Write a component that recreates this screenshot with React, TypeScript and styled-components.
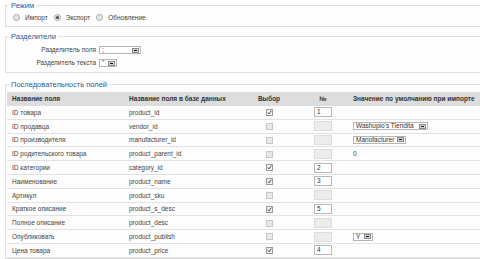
import React from "react";
import styled, { createGlobalStyle } from "styled-components";

const Global = createGlobalStyle`
  html, body { margin: 0; padding: 0; background: #fff; }
  body {
    font-family: "Liberation Sans", Arial, sans-serif;
    font-size: 6.5px;
    color: #444;
    overflow: hidden;
    width: 480px;
    height: 259px;
  }
`;

const Page = styled.div`
  padding-top: 1px;
  width: 480px;
  overflow: hidden;
`;

const Fieldset = styled.fieldset<{ $pt: number; $pb: number; $mb: number }>`
  margin: 0 -6px ${(p) => p.$mb}px 5px;
  padding: ${(p) => p.$pt}px 0 ${(p) => p.$pb}px 2px;
  border: 1px solid #e0e0e0;
  background: #fdfdfd;
  min-width: 0;
`;

const Legend = styled.legend`
  margin-left: 1px;
  padding: 0 2px;
  font-size: 7.5px;
  line-height: 9px;
  color: #2d5e91;
`;

const RadioRow = styled.div`
  display: flex;
  align-items: center;
  height: 9px;
  padding-left: 5px;
`;

const RadioItem = styled.label`
  display: flex;
  align-items: center;
  gap: 5px;
  margin-right: 6px;
  color: #444;
`;

const RadioCircle = styled.span<{ $on?: boolean }>`
  position: relative;
  width: 5px;
  height: 5px;
  border-radius: 50%;
  border: 1px solid #a8a8a8;
  background: #e6e6e6;
  box-sizing: content-box;
  &::after {
    content: "";
    display: ${(p) => (p.$on ? "block" : "none")};
    position: absolute;
    left: 1px;
    top: 1px;
    width: 3px;
    height: 3px;
    border-radius: 50%;
    background: #3a4a3a;
  }
`;

const SepGrid = styled.div`
  display: grid;
  grid-template-columns: 88px auto;
  column-gap: 3px;
  row-gap: 3px;
  align-items: center;
`;

const SepLabel = styled.span`
  text-align: right;
  line-height: 10px;
  color: #444;
`;

const Select = styled.div<{ $w: number }>`
  display: flex;
  align-items: center;
  justify-content: space-between;
  gap: 2px;
  width: ${(p) => p.$w}px;
  height: 8px;
  box-sizing: border-box;
  border: 1px solid #b5b5b5;
  background: #fff;
  padding-left: 2px;
  font-size: 6.5px;
  line-height: 6px;
  color: #333;
  white-space: nowrap;
`;

const SelectBtn = styled.span`
  display: flex;
  flex: none;
  align-items: center;
  justify-content: center;
  width: 7px;
  height: 5px;
  margin-right: 1px;
  background: #d6d6d6;
  border: 1px solid #8a8a8a;
  box-sizing: border-box;
  &::after {
    content: "";
    width: 3px;
    height: 1px;
    background: #111;
  }
`;

const Table = styled.table`
  margin-left: -1px;
  margin-top: 3px;
  width: 473px;
  border-collapse: collapse;
  table-layout: fixed;
`;

const Th = styled.th<{ $align?: string; $pl?: number }>`
  background: #dddddd;
  height: 13.5px;
  padding: 0 0 0 ${(p) => p.$pl ?? 0}px;
  text-align: ${(p) => p.$align ?? "left"};
  font-weight: bold;
  color: #333;
  font-size: 6.5px;
  white-space: nowrap;
  overflow: hidden;
`;

const Tr = styled.tr`
  height: 13.8px;
  border-bottom: 1px solid #e2e2e2;
`;

const Td = styled.td<{ $align?: string; $pl?: number }>`
  padding: 0 0 0 ${(p) => p.$pl ?? 0}px;
  text-align: ${(p) => p.$align ?? "left"};
  vertical-align: middle;
  color: #444;
  white-space: nowrap;
  overflow: hidden;
`;

const Check = styled.span<{ $on: boolean }>`
  display: inline-flex;
  align-items: center;
  justify-content: center;
  width: 7px;
  height: 7px;
  box-sizing: border-box;
  border: 1px solid ${(p) => (p.$on ? "#9a9a9a" : "#c8c8c8")};
  background: ${(p) => (p.$on ? "#f4f4f4" : "#e8e8e8")};
  vertical-align: middle;
`;

const NumBox = styled.div<{ $off: boolean }>`
  width: 18px;
  height: 10px;
  margin: 0 auto;
  box-sizing: border-box;
  border: 1px solid ${(p) => (p.$off ? "#dcdcdc" : "#b8b8b8")};
  background: ${(p) => (p.$off ? "#ececec" : "#fff")};
  padding-left: 2px;
  font-size: 6.5px;
  line-height: 8px;
  color: #333;
  text-align: left;
`;

type Row = {
  name: string;
  db: string;
  on: boolean;
  num?: string;
  def?: { kind: "select"; text: string; w: number } | { kind: "text"; text: string };
};

const rows: Row[] = [
  { name: "ID товара", db: "product_id", on: true, num: "1" },
  { name: "ID продавца", db: "vendor_id", on: false, def: { kind: "select", text: "Washupio's Tiendita", w: 75 } },
  { name: "ID производителя", db: "manufacturer_id", on: false, def: { kind: "select", text: "Manufacturer", w: 53 } },
  { name: "ID родительского товара", db: "product_parent_id", on: false, def: { kind: "text", text: "0" } },
  { name: "ID категории", db: "category_id", on: true, num: "2" },
  { name: "Наименование", db: "product_name", on: true, num: "3" },
  { name: "Артикул", db: "product_sku", on: false },
  { name: "Краткое описание", db: "product_s_desc", on: true, num: "5" },
  { name: "Полное описание", db: "product_desc", on: false },
  { name: "Опубликовать", db: "product_publish", on: false, def: { kind: "select", text: "Y", w: 20 } },
  { name: "Цена товара", db: "product_price", on: true, num: "4" },
];

const Tick = () => (
  <svg width="5" height="5" viewBox="0 0 5 5">
    <path d="M0.8 2.6 L2 3.9 L4.3 0.6" fill="none" stroke="#333" strokeWidth="0.9" />
  </svg>
);

export default function App() {
  return (
    <Page>
      <Global />
      <Fieldset $pt={3} $pb={4} $mb={5}>
        <Legend>Режим</Legend>
        <RadioRow>
          <RadioItem><RadioCircle />Импорт</RadioItem>
          <RadioItem><RadioCircle $on />Экспорт</RadioItem>
          <RadioItem><RadioCircle />Обновление</RadioItem>
        </RadioRow>
      </Fieldset>
      <Fieldset $pt={4} $pb={4} $mb={7}>
        <Legend>Разделители</Legend>
        <SepGrid>
          <SepLabel>Разделитель поля</SepLabel>
          <Select $w={42}>;<SelectBtn /></Select>
          <SepLabel>Разделитель текста</SepLabel>
          <Select $w={18}>"<SelectBtn /></Select>
        </SepGrid>
      </Fieldset>
      <Fieldset $pt={0} $pb={0} $mb={0}>
        <Legend>Последовательность полей</Legend>
        <Table>
          <colgroup>
            <col style={{ width: 118 }} />
            <col style={{ width: 110 }} />
            <col style={{ width: 68 }} />
            <col style={{ width: 40 }} />
            <col />
          </colgroup>
          <thead>
            <tr>
              <Th $pl={5}>Название поля</Th>
              <Th $pl={4}>Название поля в базе данных</Th>
              <Th $align="center">Выбор</Th>
              <Th $align="center">№</Th>
              <Th $pl={10}>Значение по умолчанию при импорте</Th>
            </tr>
          </thead>
          <tbody>
            {rows.map((r) => (
              <Tr key={r.db}>
                <Td $pl={5}>{r.name}</Td>
                <Td $pl={4}>{r.db}</Td>
                <Td $align="center">
                  <Check $on={r.on}>{r.on && <Tick />}</Check>
                </Td>
                <Td $align="center">
                  <NumBox $off={!r.num}>{r.num ?? ""}</NumBox>
                </Td>
                <Td $pl={10}>
                  {r.def?.kind === "select" && (
                    <Select $w={r.def.w}>
                      {r.def.text}
                      <SelectBtn />
                    </Select>
                  )}
                  {r.def?.kind === "text" && r.def.text}
                </Td>
              </Tr>
            ))}
          </tbody>
        </Table>
      </Fieldset>
    </Page>
  );
}
